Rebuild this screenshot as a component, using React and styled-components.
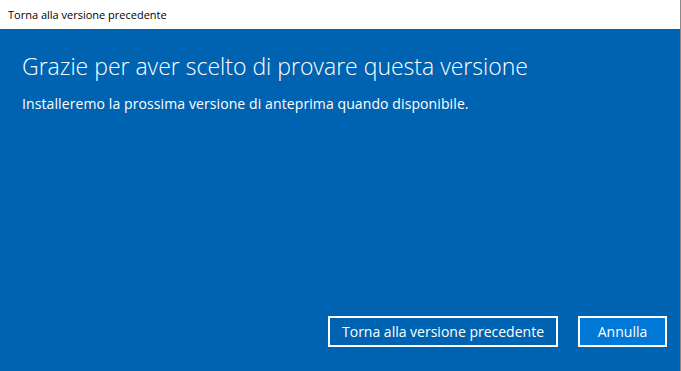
import styled, { createGlobalStyle } from "styled-components";

const GlobalStyle = createGlobalStyle`
  html, body {
    margin: 0;
    padding: 0;
    background: #ffffff;
  }
  body {
    font-family: "Open Sans", "Noto Sans", sans-serif;
  }
`;

const App = () => {
  return (
    <>
      <GlobalStyle />
      <Window>
        <TitleBar>Torna alla versione precedente</TitleBar>
        <Body>
          <Heading>Grazie per aver scelto di provare questa versione</Heading>
          <Message>Installeremo la prossima versione di anteprima quando disponibile.</Message>
          <Footer>
            <Button>Torna alla versione precedente</Button>
            <Button primary>Annulla</Button>
          </Footer>
        </Body>
      </Window>
    </>
  );
};

const Window = styled.div`
  width: 681px;
  height: 371px;
  box-sizing: border-box;
  border-right: 1px solid #8a8a8a;
  display: flex;
  flex-direction: column;
`;

const TitleBar = styled.div`
  height: 29px;
  box-sizing: border-box;
  padding: 7px 0 0 8px;
  background: #ffffff;
  color: #000000;
  font-size: 11px;
  line-height: 15px;
`;

const Body = styled.div`
  flex: 1;
  background: #0063b1;
  color: #ffffff;
  display: flex;
  flex-direction: column;
  padding: 0 13px 24px 22px;
`;

const Heading = styled.h1`
  margin: 21px 0 0 0;
  font-size: 23px;
  font-weight: 300;
  line-height: 32px;
`;

const Message = styled.p`
  margin: 12px 0 0 0;
  font-size: 14px;
  line-height: 20px;
  letter-spacing: 0.1px;
`;

const Footer = styled.div`
  margin-top: auto;
  display: flex;
  justify-content: flex-end;
  gap: 20px;
`;

const Button = styled.button`
  height: 31px;
  box-sizing: border-box;
  padding: 0 12px;
  min-width: 89px;
  border: 2px solid #ffffff;
  background: ${(p) => (p.primary ? "#0078d7" : "transparent")};
  color: #ffffff;
  font-family: "Open Sans", "Noto Sans", sans-serif;
  font-size: 14px;
  cursor: pointer;
`;

export default App;
